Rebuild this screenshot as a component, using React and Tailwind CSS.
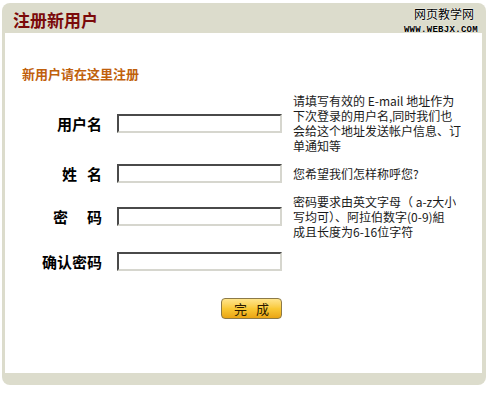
const cjk = { fontFamily: '"Noto Sans CJK SC", "Noto Sans", sans-serif' };

const inputCls =
  "ml-[15px] h-[19px] w-[165px] shrink-0 border-2 border-t-[#4a4a4a] border-l-[#4a4a4a] border-b-[#d6d6ce] border-r-[#d6d6ce] bg-white";
const labelCls = "w-[80px] shrink-0 text-right text-[15px] font-bold leading-[19px] text-black";

function Help({ lines }) {
  return (
    <div className="ml-[11px] flex flex-col text-[12px] text-[#1a1a1a]">
      {lines.map((l) => (
        <div key={l} className="h-[15px] overflow-hidden whitespace-nowrap leading-[15px]">{l}</div>
      ))}
    </div>
  );
}

export default function App() {
  return (
    <div className="min-h-[394px] bg-white pt-[3px]" style={cjk}>
      <div className="ml-[2px] w-[484px] rounded-[8px] bg-[#dcdccc] pl-[3px] pr-[4px] pb-[12px]">
        {/* header */}
        <div className="flex h-[30px] items-start justify-between">
          <div className="pl-[8px] pt-[8px] text-[17px] font-bold leading-[17px] text-[#7b0a0a]">注册新用户</div>
          <div className="flex flex-col items-end pr-[4px] pt-[4px]">
            <div className="mr-[4px] text-[12px] leading-[14px] text-black [text-shadow:0_0_2px_#fff,0_0_1px_#fff]">网页教学网</div>
            <div className="mt-[5px] text-[9px] font-bold leading-[9px] tracking-[0.3px] text-black [text-shadow:0_0_2px_#fff]" style={{ fontFamily: '"Liberation Mono", monospace' }}>WWW.WEBJX.COM</div>
          </div>
        </div>

        {/* body */}
        <div className="h-[340px] bg-white pl-[17px] pt-[33px]">
          <div className="text-[13px] font-bold leading-[16px] text-[#c0600c]">新用户请在这里注册</div>

          <div className="mt-[11px] flex flex-col">
            <div className="flex h-[60px] items-center">
              <div className={labelCls}>用户名</div>
              <div className={inputCls} />
              <Help
                lines={[
                  "请填写有效的 E-mail 地址作为",
                  "下次登录的用户名,同时我们也",
                  "会给这个地址发送帐户信息、订",
                  "单通知等",
                ]}
              />
            </div>

            <div className="mt-[11px] flex h-[19px] items-center">
              <div className={labelCls}>
                <span>姓</span><span className="ml-[10px]">名</span>
              </div>
              <div className={inputCls} />
              <Help lines={["您希望我们怎样称呼您?"]} />
            </div>

            <div className="mt-[11px] flex h-[45px] items-center">
              <div className={labelCls}>
                <span>密</span><span className="ml-[19px]">码</span>
              </div>
              <div className={inputCls} />
              <Help
                lines={[
                  "密码要求由英文字母（ a-z大小",
                  "写均可）、阿拉伯数字(0-9)組",
                  "成且长度为6-16位字符",
                ]}
              />
            </div>

            <div className="mt-[13px] flex h-[19px] items-center">
              <div className={labelCls}>确认密码</div>
              <div className={inputCls} />
            </div>

            <div className="mt-[27px] flex w-[260px] justify-end">
              <button className="flex h-[21px] w-[61px] items-center justify-center rounded-[4px] border border-[#8c7a48] bg-gradient-to-b from-[#ffe58a] via-[#f9c935] to-[#eaa512] text-[13px] leading-[13px] text-[#2a1a00]">
                <span>完</span><span className="ml-[9px]">成</span>
              </button>
            </div>
          </div>
        </div>
      </div>
    </div>
  );
}
